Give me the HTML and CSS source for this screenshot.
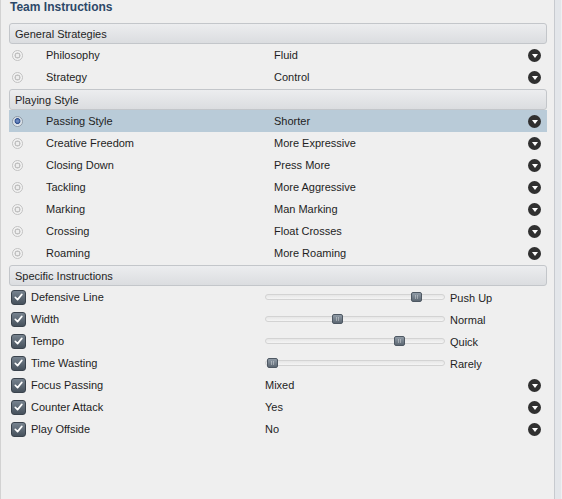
FILE: index.html
```html
<!DOCTYPE html>
<html>
<head>
<meta charset="utf-8">
<link rel="stylesheet" href="styles.css">
</head>
<body>
<div class="frame">
  <div class="main">
    <div class="title">Team Instructions</div>

    <section class="group">
      <div class="group-head">General Strategies</div>
      <div class="row"><span class="radio"></span><span class="label">Philosophy</span><span class="value">Fluid</span><span class="drop"></span></div>
      <div class="row"><span class="radio"></span><span class="label">Strategy</span><span class="value">Control</span><span class="drop"></span></div>
    </section>

    <section class="group">
      <div class="group-head">Playing Style</div>
      <div class="row selected"><span class="radio on"></span><span class="label">Passing Style</span><span class="value">Shorter</span><span class="drop"></span></div>
      <div class="row"><span class="radio"></span><span class="label">Creative Freedom</span><span class="value">More Expressive</span><span class="drop"></span></div>
      <div class="row"><span class="radio"></span><span class="label">Closing Down</span><span class="value">Press More</span><span class="drop"></span></div>
      <div class="row"><span class="radio"></span><span class="label">Tackling</span><span class="value">More Aggressive</span><span class="drop"></span></div>
      <div class="row"><span class="radio"></span><span class="label">Marking</span><span class="value">Man Marking</span><span class="drop"></span></div>
      <div class="row"><span class="radio"></span><span class="label">Crossing</span><span class="value">Float Crosses</span><span class="drop"></span></div>
      <div class="row"><span class="radio"></span><span class="label">Roaming</span><span class="value">More Roaming</span><span class="drop"></span></div>
    </section>

    <section class="group">
      <div class="group-head">Specific Instructions</div>
      <div class="srow"><span class="check"><svg viewBox="0 0 14 14" width="14" height="14"><path d="M3.5 7.3 L6 9.8 L10.6 4.2" fill="none" stroke="#fff" stroke-width="1.8" stroke-linecap="round" stroke-linejoin="round"/></svg></span><span class="label">Defensive Line</span><span class="track"><span class="thumb" style="left:145px"></span></span><span class="svalue">Push Up</span></div>
      <div class="srow"><span class="check"><svg viewBox="0 0 14 14" width="14" height="14"><path d="M3.5 7.3 L6 9.8 L10.6 4.2" fill="none" stroke="#fff" stroke-width="1.8" stroke-linecap="round" stroke-linejoin="round"/></svg></span><span class="label">Width</span><span class="track"><span class="thumb" style="left:66px"></span></span><span class="svalue">Normal</span></div>
      <div class="srow"><span class="check"><svg viewBox="0 0 14 14" width="14" height="14"><path d="M3.5 7.3 L6 9.8 L10.6 4.2" fill="none" stroke="#fff" stroke-width="1.8" stroke-linecap="round" stroke-linejoin="round"/></svg></span><span class="label">Tempo</span><span class="track"><span class="thumb" style="left:128px"></span></span><span class="svalue">Quick</span></div>
      <div class="srow"><span class="check"><svg viewBox="0 0 14 14" width="14" height="14"><path d="M3.5 7.3 L6 9.8 L10.6 4.2" fill="none" stroke="#fff" stroke-width="1.8" stroke-linecap="round" stroke-linejoin="round"/></svg></span><span class="label">Time Wasting</span><span class="track"><span class="thumb" style="left:1px"></span></span><span class="svalue">Rarely</span></div>
      <div class="srow"><span class="check"><svg viewBox="0 0 14 14" width="14" height="14"><path d="M3.5 7.3 L6 9.8 L10.6 4.2" fill="none" stroke="#fff" stroke-width="1.8" stroke-linecap="round" stroke-linejoin="round"/></svg></span><span class="label">Focus Passing</span><span class="dvalue">Mixed</span><span class="drop"></span></div>
      <div class="srow"><span class="check"><svg viewBox="0 0 14 14" width="14" height="14"><path d="M3.5 7.3 L6 9.8 L10.6 4.2" fill="none" stroke="#fff" stroke-width="1.8" stroke-linecap="round" stroke-linejoin="round"/></svg></span><span class="label">Counter Attack</span><span class="dvalue">Yes</span><span class="drop"></span></div>
      <div class="srow"><span class="check"><svg viewBox="0 0 14 14" width="14" height="14"><path d="M3.5 7.3 L6 9.8 L10.6 4.2" fill="none" stroke="#fff" stroke-width="1.8" stroke-linecap="round" stroke-linejoin="round"/></svg></span><span class="label">Play Offside</span><span class="dvalue">No</span><span class="drop"></span></div>
    </section>
  </div>
  <div class="side"></div>
</div>
</body>
</html>
```
FILE: styles.css
```css
html, body {
  margin: 0;
  padding: 0;
}
body {
  background: #efefef;
  font-family: "Liberation Sans", Arial, sans-serif;
  font-size: 11px;
  color: #1e1e1e;
  width: 562px;
  height: 499px;
  overflow: hidden;
}
.frame {
  display: flex;
  height: 499px;
}
.main {
  flex: 1;
  border-left: 1px solid #d2d2d2;
  border-right: 1px solid #c7cacf;
  padding: 0 7px 0 8px;
}
.side {
  width: 6px;
  background: #e3e6ea;
  border-right: 1px solid #eef0f2;
}
.title {
  height: 23px;
  line-height: 14px;
  font-size: 12px;
  font-weight: bold;
  color: #2c4868;
  padding-left: 1px;
}
.group + .group {
  margin-top: 1px;
}
.group-head {
  box-sizing: border-box;
  height: 21px;
  line-height: 19px;
  padding: 1px 0 0 5px;
  border: 1px solid #c3c6ca;
  border-radius: 3px;
  background: linear-gradient(#ecedef, #dbdde0);
  color: #1f1f1f;
}
.row {
  display: grid;
  grid-template-columns: 37px 228px 1fr 14px;
  align-items: center;
  height: 22px;
  padding-right: 5px;
}
.row.selected {
  background: #b9cbd8;
}
.radio {
  box-sizing: border-box;
  width: 11px;
  height: 11px;
  margin-left: 3px;
  border-radius: 50%;
  border: 1px solid #c2c2c2;
  background: radial-gradient(circle, #eeeeee 0 1.4px, #c2c2c2 1.9px 2.8px, #f3f3f3 3.3px);
}
.radio.on {
  border-color: #8f9aa6;
  background: radial-gradient(circle at 50% 45%, #6b88c0 0 1px, #2d4d8c 2.6px, #c9d3de 3.2px, #e8edf2 4.5px);
}
.drop {
  width: 13px;
  height: 13px;
  border-radius: 50%;
  background: #303030;
  position: relative;
}
.drop::after {
  content: "";
  position: absolute;
  left: 3.5px;
  top: 5px;
  border-left: 3px solid transparent;
  border-right: 3px solid transparent;
  border-top: 4px solid #fff;
}
.srow {
  display: grid;
  grid-template-columns: 22px 234px 180px 1fr 14px;
  align-items: center;
  height: 22px;
  padding-right: 5px;
}
.check {
  box-sizing: border-box;
  width: 15px;
  height: 15px;
  margin-left: 2px;
  border-radius: 3px;
  border: 1px solid #3a434d;
  background: linear-gradient(#77838f, #46515c);
  display: flex;
  align-items: center;
  justify-content: center;
}
.check svg {
  display: block;
}
.track {
  position: relative;
  height: 6px;
  box-sizing: border-box;
  border: 1px solid #d3d3d3;
  border-radius: 3px;
  background: linear-gradient(#e6e6e6, #f4f4f4);
}
.thumb {
  position: absolute;
  top: -3px;
  width: 11px;
  height: 10px;
  box-sizing: border-box;
  border: 1px solid #4e5863;
  border-radius: 2px;
  background:
    linear-gradient(90deg, transparent 3px, rgba(255,255,255,0.35) 3px 4px, transparent 4px 5px, rgba(255,255,255,0.35) 5px 6px, transparent 6px) center / 100% 4px no-repeat,
    linear-gradient(#909ba6, #5c6772);
}
.svalue {
  padding: 1px 0 0 5px;
  grid-column: 4 / 6;
}
.dvalue {
  grid-column: 3 / 5;
}
```
